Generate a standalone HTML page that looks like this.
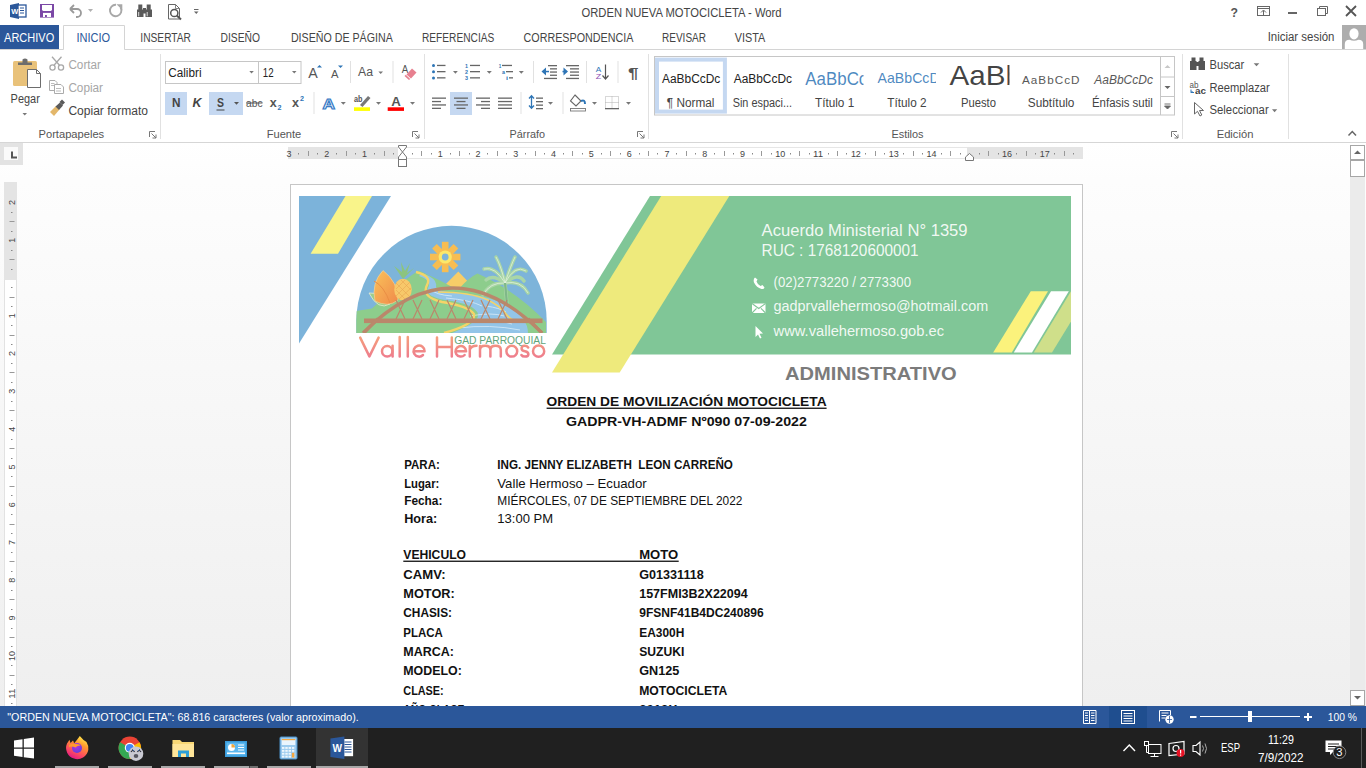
<!DOCTYPE html><html><head><meta charset="utf-8"><style>html,body{margin:0;padding:0;width:1366px;height:768px;overflow:hidden;background:#fff}svg{display:block}text{font-family:"Liberation Sans",sans-serif;white-space:pre}</style></head><body><svg width="1366" height="768" viewBox="0 0 1366 768"><rect x="0" y="0" width="1366" height="143" fill="#ffffff"/>
<defs><linearGradient id="docbg" x1="0" y1="0" x2="0" y2="1"><stop offset="0" stop-color="#ffffff"/><stop offset="0.066" stop-color="#fdfdfd"/><stop offset="1" stop-color="#efefef"/></linearGradient></defs>
<rect x="0" y="143" width="1366" height="563" fill="url(#docbg)"/>
<rect x="0" y="142" width="1366" height="1" fill="#d6d6d6"/>
<g transform="translate(10,3)"><path d="M0 2 L9 0 L9 16 L0 14 Z" fill="#2b579a"/><rect x="8" y="2" width="8" height="12" fill="#fff" stroke="#2b579a" stroke-width="1.3"/><path d="M10 5h4M10 7.5h4M10 10h4" stroke="#2b579a" stroke-width="1"/><text x="1.3" y="11" font-size="7.5" font-weight="bold" fill="#fff" font-family="Liberation Sans">W</text></g>
<rect x="40" y="4" width="14" height="13.6" fill="#7b48a6"/><path d="M42 5 H52 V9.5 Q52 10.9 50.6 10.9 H43.4 Q42 10.9 42 9.5 Z" fill="#fff"/><rect x="43" y="12.9" width="8" height="4.1" fill="#fff"/><rect x="45" y="15" width="1.9" height="2" fill="#7b48a6"/>
<path d="M70 9 L74 5 M70 9 L74 13 M70.5 9 H77 A4 4 0 0 1 77 17 H76" stroke="#9a9a9a" stroke-width="1.8" fill="none"/>
<path d="M88 9 L93 9 L90.5 12 Z" fill="#b0b0b0"/>
<path d="M116 4.8 A5.7 5.7 0 1 0 120.6 7.6" stroke="#a8a8a8" stroke-width="1.9" fill="none"/><path d="M116.5 4.2 H122.3 V10 Z" fill="#a8a8a8"/>
<g fill="#5a5a5a"><rect x="137" y="9.5" width="6.5" height="7.5"/><rect x="145.5" y="9.5" width="6.5" height="7.5"/><rect x="138.3" y="4.5" width="4" height="5.5"/><rect x="146.7" y="4.5" width="4" height="5.5"/><rect x="143" y="8" width="3" height="5.5"/></g><path d="M138.7 12 V16.3 M147.2 12 V16.3" stroke="#fff" stroke-width="0.8"/>
<path d="M168.5 4.5 H175.5 L179.5 8.5 V19 H168.5 Z" fill="none" stroke="#666" stroke-width="1"/><path d="M175.5 4.5 V8.5 H179.5" fill="none" stroke="#666" stroke-width="0.8"/><circle cx="174.3" cy="13" r="3.6" fill="#fff" stroke="#555" stroke-width="1.5"/><path d="M176.8 15.5 L181 19.5" stroke="#555" stroke-width="2"/>
<path d="M194 9.5 H198.5" stroke="#666" stroke-width="1"/><path d="M194 11.5 H198.5 L196.25 14 Z" fill="#666"/>
<text x="581.5" y="17" font-size="12.3" fill="#444" textLength="200" lengthAdjust="spacingAndGlyphs">ORDEN NUEVA MOTOCICLETA - Word</text>
<text x="1230.5" y="16.5" font-size="13" fill="#555" textLength="7.5" lengthAdjust="spacingAndGlyphs" font-weight="bold">?</text>
<rect x="1257.5" y="6.5" width="12" height="9" fill="none" stroke="#666" stroke-width="1"/><path d="M1257.5 8.5 H1269.5" stroke="#666"/><path d="M1263.5 15 V10.5 M1261 12.5 L1263.5 10 L1266 12.5" stroke="#666" fill="none" stroke-width="1"/>
<rect x="1288" y="12" width="9" height="2" fill="#666"/>
<rect x="1317.5" y="8.5" width="8" height="7" fill="none" stroke="#666"/><path d="M1319.5 8.5 V6.5 H1327.5 V13.5 H1325.5" fill="none" stroke="#666"/>
<path d="M1346 6 L1356 16 M1356 6 L1346 16" stroke="#555" stroke-width="1.8"/>
<rect x="0" y="25" width="59" height="25" fill="#2b579a"/>
<text x="4.1" y="42" font-size="12.3" fill="#ffffff" textLength="50.1" lengthAdjust="spacingAndGlyphs">ARCHIVO</text>
<path d="M0 49.5 H63.5 V25.5 H124.5 V49.5 H1366" fill="#fff" stroke="#d4d4d4" stroke-width="1"/>
<rect x="64" y="40" width="60" height="10" fill="#fff"/>
<text x="76.4" y="42" font-size="12.3" fill="#2b579a" textLength="33.7" lengthAdjust="spacingAndGlyphs">INICIO</text>
<text x="140.3" y="42" font-size="12.3" fill="#444" textLength="50.7" lengthAdjust="spacingAndGlyphs">INSERTAR</text>
<text x="220.6" y="42" font-size="12.3" fill="#444" textLength="39.4" lengthAdjust="spacingAndGlyphs">DISEÑO</text>
<text x="290.9" y="42" font-size="12.3" fill="#444" textLength="101.9" lengthAdjust="spacingAndGlyphs">DISEÑO DE PÁGINA</text>
<text x="422" y="42" font-size="12.3" fill="#444" textLength="72.3" lengthAdjust="spacingAndGlyphs">REFERENCIAS</text>
<text x="523.6" y="42" font-size="12.3" fill="#444" textLength="109.8" lengthAdjust="spacingAndGlyphs">CORRESPONDENCIA</text>
<text x="662" y="42" font-size="12.3" fill="#444" textLength="44" lengthAdjust="spacingAndGlyphs">REVISAR</text>
<text x="734.7" y="42" font-size="12.3" fill="#444" textLength="30.5" lengthAdjust="spacingAndGlyphs">VISTA</text>
<text x="1267.7" y="41" font-size="12.3" fill="#444" textLength="66.7" lengthAdjust="spacingAndGlyphs">Iniciar sesión</text>
<rect x="1342" y="25" width="24" height="24" fill="#adadad"/>
<ellipse cx="1354" cy="33.8" rx="4.6" ry="5.6" fill="#fff"/><path d="M1344.8 49 V44 Q1345 39.8 1349.5 39.8 Q1354 41.5 1358.5 39.8 Q1363 39.8 1363.2 44 V49 Z" fill="#fff"/>
<rect x="160" y="54" width="1" height="85" fill="#e1e1e1"/>
<rect x="424" y="54" width="1" height="85" fill="#e1e1e1"/>
<rect x="648" y="54" width="1" height="85" fill="#e1e1e1"/>
<rect x="1182" y="54" width="1" height="85" fill="#e1e1e1"/>
<rect x="1288" y="54" width="1" height="85" fill="#e1e1e1"/>
<rect x="13" y="61" width="24" height="25" rx="1.5" fill="#e9c27a"/>
<path d="M18 65 V62.5 H22.5 V59.5 Q25 57.5 27.5 59.5 V62.5 H32 V65 Z" fill="#6d6d6d"/>
<path d="M27.5 69.5 H36.5 L40.5 73.5 V87.5 H27.5 Z" fill="#fff" stroke="#6d6d6d" stroke-width="1"/><path d="M36.5 69.5 V73.5 H40.5" fill="none" stroke="#6d6d6d" stroke-width="1"/>
<text x="10.6" y="103.2" font-size="12.3" fill="#444" textLength="29.2" lengthAdjust="spacingAndGlyphs">Pegar</text>
<path d="M22.5 113 H27.0 L24.75 115.475 Z" fill="#777"/>
<g stroke="#a8a8a8" stroke-width="1.3" fill="none"><circle cx="52.5" cy="67.5" r="2.6"/><circle cx="61" cy="67.5" r="2.6"/><path d="M54 65.3 L61.5 56.8 M59.5 65.3 L52 56.8"/></g>
<text x="68.4" y="69.3" font-size="12.3" fill="#a6a6a6" textLength="32.6" lengthAdjust="spacingAndGlyphs">Cortar</text>
<g stroke="#ababab" stroke-width="1" fill="#fff"><path d="M49.5 80.5 H55 L57 82.5 V90.5 H49.5 Z"/><path d="M54.5 84.5 H61 L63.5 87 V93.5 H54.5 Z"/><path d="M51 83.5h3.5M51 85.5h3M56 88.5h5M56 91h5" stroke-width="0.8"/></g>
<text x="68.4" y="92.1" font-size="12.3" fill="#a6a6a6" textLength="34.6" lengthAdjust="spacingAndGlyphs">Copiar</text>
<path d="M50 112 L56 106 L59.5 109.5 L54 116 Z" fill="#e3b76a"/><path d="M55.5 106.5 L60 102.5 L63 105.5 L59 110 Z" fill="#5a5a5a"/><path d="M59.5 102 L62 99.5 L65 102.5 L62.5 105 Z" fill="#5a5a5a"/>
<text x="68.4" y="114.9" font-size="12.3" fill="#444" textLength="79.6" lengthAdjust="spacingAndGlyphs">Copiar formato</text>
<text x="38.5" y="137.8" font-size="11" fill="#555" textLength="65.7" lengthAdjust="spacingAndGlyphs">Portapapeles</text>
<path d="M149.5 137 V131.5 H155" fill="none" stroke="#777" stroke-width="1"/><path d="M151.5 133.5 L156 138 M156 134.5 V138 H152.5" fill="none" stroke="#777" stroke-width="1"/>
<rect x="165.5" y="61.5" width="93" height="22" fill="#fff" stroke="#c6c6c6"/><rect x="258.5" y="61.5" width="42.5" height="22" fill="#fff" stroke="#c6c6c6"/>
<text x="168.3" y="76.7" font-size="12.3" fill="#222" textLength="33.2" lengthAdjust="spacingAndGlyphs">Calibri</text>
<path d="M249.3 71 H253.8 L251.55 73.475 Z" fill="#777"/>
<text x="262.8" y="76.7" font-size="12.3" fill="#222" textLength="10.8" lengthAdjust="spacingAndGlyphs">12</text>
<path d="M292 71 H296.5 L294.25 73.475 Z" fill="#777"/>
<text x="308.2" y="78" font-size="14" fill="#555" textLength="9.5" lengthAdjust="spacingAndGlyphs">A</text>
<path d="M317 67.5 H322 L319.5 65 Z" fill="#2e75b6"/>
<text x="331" y="78" font-size="11" fill="#555" textLength="7.5" lengthAdjust="spacingAndGlyphs">A</text>
<path d="M338 65.5 H343 L340.5 68 Z" fill="#2e75b6"/>
<rect x="350" y="61" width="1" height="22" fill="#e1e1e1"/>
<text x="358" y="76" font-size="12.5" fill="#555" textLength="15" lengthAdjust="spacingAndGlyphs">Aa</text>
<path d="M378.4 71.5 H383.0 L380.7 74.03 Z" fill="#777"/>
<rect x="392.5" y="61" width="1" height="22" fill="#e1e1e1"/>
<text x="401.8" y="73" font-size="11" fill="#555" textLength="6.5" lengthAdjust="spacingAndGlyphs">A</text>
<path d="M406.5 74.5 L412 68.5 L416.5 72.5 L411 78.5 Z" fill="#e7808f"/><path d="M404.5 76 L405.8 74.8 L410.2 79 L409 80 Z" fill="#e7808f"/>
<rect x="165" y="92" width="22" height="23" fill="#c5d8f1"/>
<rect x="209" y="92" width="34" height="23" fill="#c5d8f1"/>
<text x="171.9" y="107.3" font-size="12" fill="#444" textLength="8.5" lengthAdjust="spacingAndGlyphs" font-weight="bold">N</text>
<text x="192.6" y="107.3" font-size="12" fill="#444" textLength="9" lengthAdjust="spacingAndGlyphs" font-weight="bold" font-style="italic">K</text>
<text x="217" y="107.3" font-size="12" fill="#444" textLength="7" lengthAdjust="spacingAndGlyphs" font-weight="bold">S</text>
<rect x="216.5" y="109.5" width="8" height="1" fill="#444"/>
<path d="M234 102 H239 L236.5 104.75 Z" fill="#555"/>
<text x="246" y="107" font-size="11.5" fill="#555" textLength="16.5" lengthAdjust="spacingAndGlyphs">abc</text>
<rect x="246" y="102.5" width="16.5" height="1" fill="#555"/>
<text x="269.7" y="107.3" font-size="12.5" fill="#555" textLength="7" lengthAdjust="spacingAndGlyphs" font-weight="bold">x</text>
<text x="277.5" y="110" font-size="6.5" fill="#2e75b6" textLength="4" lengthAdjust="spacingAndGlyphs" font-weight="bold">2</text>
<text x="292" y="107.3" font-size="12.5" fill="#555" textLength="7" lengthAdjust="spacingAndGlyphs" font-weight="bold">x</text>
<text x="300" y="100.5" font-size="6.5" fill="#2e75b6" textLength="4" lengthAdjust="spacingAndGlyphs" font-weight="bold">2</text>
<rect x="313.5" y="92" width="1" height="22" fill="#e1e1e1"/>
<text x="322.5" y="109" font-size="15.5" fill="#fff" textLength="12.5" lengthAdjust="spacingAndGlyphs" font-weight="bold" stroke="#3a7cc6" stroke-width="1.2">A</text>
<path d="M340.8 102 H345.8 L343.3 104.75 Z" fill="#777"/>
<text x="354" y="102" font-size="8.5" fill="#555" textLength="8.5" lengthAdjust="spacingAndGlyphs" font-weight="bold">ab</text>
<path d="M360 105 L368 96 L370.5 98 L362.5 107 Z" fill="#777"/>
<rect x="354" y="107.3" width="16" height="3.6" fill="#ffff00"/>
<path d="M376 102 H381 L378.5 104.75 Z" fill="#777"/>
<text x="391.3" y="106.2" font-size="12.5" fill="#555" textLength="9.6" lengthAdjust="spacingAndGlyphs" font-weight="bold">A</text>
<rect x="387.7" y="107.3" width="16.3" height="3.6" fill="#ff0000"/>
<path d="M410 102 H415 L412.5 104.75 Z" fill="#777"/>
<text x="266.7" y="137.8" font-size="11" fill="#555" textLength="34.6" lengthAdjust="spacingAndGlyphs">Fuente</text>
<path d="M412.5 137 V131.5 H418" fill="none" stroke="#777" stroke-width="1"/><path d="M414.5 133.5 L419 138 M419 134.5 V138 H415.5" fill="none" stroke="#777" stroke-width="1"/>
<circle cx="433.5" cy="65.5" r="1.5" fill="#2e75b6"/>
<rect x="437" y="64.8" width="8.5" height="1.3" fill="#666"/>
<circle cx="433.5" cy="71.7" r="1.5" fill="#2e75b6"/>
<rect x="437" y="71.0" width="8.5" height="1.3" fill="#666"/>
<circle cx="433.5" cy="77.9" r="1.5" fill="#2e75b6"/>
<rect x="437" y="77.2" width="8.5" height="1.3" fill="#666"/>
<path d="M453 71 H457.8 L455.4 73.64 Z" fill="#777"/>
<text x="465" y="68" font-size="5.5" fill="#2e75b6" textLength="3" lengthAdjust="spacingAndGlyphs" font-weight="bold">1</text>
<rect x="470" y="64.8" width="10" height="1.3" fill="#666"/>
<text x="465" y="74" font-size="5.5" fill="#2e75b6" textLength="3" lengthAdjust="spacingAndGlyphs" font-weight="bold">2</text>
<rect x="470" y="71.0" width="10" height="1.3" fill="#666"/>
<text x="465" y="80" font-size="5.5" fill="#2e75b6" textLength="3" lengthAdjust="spacingAndGlyphs" font-weight="bold">3</text>
<rect x="470" y="77.2" width="10" height="1.3" fill="#666"/>
<path d="M486.8 71 H491.8 L489.3 73.75 Z" fill="#777"/>
<text x="498.7" y="68" font-size="5.5" fill="#2e75b6" textLength="2.5" lengthAdjust="spacingAndGlyphs" font-weight="bold">1</text>
<rect x="502" y="64.8" width="10" height="1.3" fill="#666"/>
<text x="502" y="74" font-size="5.5" fill="#2e75b6" textLength="3" lengthAdjust="spacingAndGlyphs" font-weight="bold">a</text>
<rect x="506" y="71" width="7" height="1.3" fill="#666"/>
<text x="506" y="80" font-size="5.5" fill="#2e75b6" textLength="2" lengthAdjust="spacingAndGlyphs" font-weight="bold">i</text>
<rect x="509" y="77.2" width="4" height="1.3" fill="#666"/>
<path d="M518.8 71 H523.8 L521.3 73.75 Z" fill="#777"/>
<rect x="533" y="61" width="1" height="22" fill="#e1e1e1"/>
<path d="M541.5 71.5 L546 67.5 V75.5 Z" fill="#2e75b6"/><rect x="545" y="70.8" width="4" height="1.5" fill="#2e75b6"/>
<rect x="548" y="65" width="9" height="1.3" fill="#666"/>
<rect x="550" y="68.2" width="7" height="1.3" fill="#666"/>
<rect x="550" y="71.4" width="7" height="1.3" fill="#666"/>
<rect x="550" y="74.6" width="7" height="1.3" fill="#666"/>
<rect x="544" y="77.8" width="13" height="1.3" fill="#666"/>
<path d="M568 71.5 L563.5 67.5 V75.5 Z" fill="#2e75b6"/><rect x="562.5" y="70.8" width="4" height="1.5" fill="#2e75b6"/>
<rect x="566" y="65" width="13" height="1.3" fill="#666"/>
<rect x="570" y="68.2" width="9" height="1.3" fill="#666"/>
<rect x="570" y="71.4" width="9" height="1.3" fill="#666"/>
<rect x="570" y="74.6" width="9" height="1.3" fill="#666"/>
<rect x="566" y="77.8" width="13" height="1.3" fill="#666"/>
<rect x="586" y="61" width="1" height="22" fill="#e1e1e1"/>
<text x="595.7" y="71.5" font-size="7.5" fill="#2e75b6" textLength="5.5" lengthAdjust="spacingAndGlyphs">A</text>
<text x="595.7" y="79" font-size="7.5" fill="#8e4db3" textLength="5.5" lengthAdjust="spacingAndGlyphs">Z</text>
<path d="M605.5 64.5 V78.5 M602.5 75.5 L605.5 79 L608.5 75.5" stroke="#555" stroke-width="1.2" fill="none"/>
<rect x="617.5" y="61" width="1" height="22" fill="#e1e1e1"/>
<text x="628" y="77.8" font-size="14" fill="#555" textLength="10.5" lengthAdjust="spacingAndGlyphs" font-weight="bold">¶</text>
<rect x="450" y="92" width="22" height="23" fill="#c5d8f1"/>
<rect x="432" y="97.5" width="14" height="1.3" fill="#666"/>
<rect x="432" y="100.9" width="9" height="1.3" fill="#666"/>
<rect x="432" y="104.3" width="14" height="1.3" fill="#666"/>
<rect x="432" y="107.7" width="9" height="1.3" fill="#666"/>
<rect x="454.0" y="97.5" width="14" height="1.3" fill="#666"/>
<rect x="456.5" y="100.9" width="9" height="1.3" fill="#666"/>
<rect x="454.0" y="104.3" width="14" height="1.3" fill="#666"/>
<rect x="456.5" y="107.7" width="9" height="1.3" fill="#666"/>
<rect x="476" y="97.5" width="14" height="1.3" fill="#666"/>
<rect x="481" y="100.9" width="9" height="1.3" fill="#666"/>
<rect x="476" y="104.3" width="14" height="1.3" fill="#666"/>
<rect x="481" y="107.7" width="9" height="1.3" fill="#666"/>
<rect x="498" y="97.5" width="14" height="1.3" fill="#666"/>
<rect x="498" y="100.9" width="14" height="1.3" fill="#666"/>
<rect x="498" y="104.3" width="14" height="1.3" fill="#666"/>
<rect x="498" y="107.7" width="14" height="1.3" fill="#666"/>
<rect x="520.5" y="92" width="1" height="22" fill="#e1e1e1"/>
<path d="M531.5 96 V108 M529 98.5 L531.5 95.8 L534 98.5 M529 105.5 L531.5 108.2 L534 105.5" stroke="#2e75b6" stroke-width="1.3" fill="none"/>
<rect x="536" y="97.5" width="7" height="1.3" fill="#666"/>
<rect x="536" y="101" width="7" height="1.3" fill="#666"/>
<rect x="536" y="104.5" width="7" height="1.3" fill="#666"/>
<rect x="536" y="108" width="7" height="1.3" fill="#666"/>
<path d="M548 102 H553 L550.5 104.75 Z" fill="#777"/>
<rect x="562.5" y="92" width="1" height="22" fill="#e1e1e1"/>
<path d="M575 95 L581 101 L576 106 L570.5 101 Z" fill="#fff" stroke="#666" stroke-width="1.1"/><path d="M581 101 Q585 99 585 104" stroke="#2e75b6" stroke-width="2" fill="none"/><rect x="570.5" y="108.5" width="15" height="2.5" fill="#fff" stroke="#777" stroke-width="0.9"/>
<path d="M592 102 H597 L594.5 104.75 Z" fill="#777"/>
<rect x="605.5" y="96.5" width="13" height="12" fill="none" stroke="#b0b0b0" stroke-width="1" stroke-dasharray="1,1"/><path d="M612 96.5 V108.5 M605.5 102.5 H618.5" stroke="#b0b0b0" stroke-width="1" stroke-dasharray="1,1"/><rect x="605" y="108" width="14" height="1.3" fill="#666"/>
<path d="M626 102 H631 L628.5 104.75 Z" fill="#777"/>
<text x="509.6" y="137.8" font-size="11" fill="#555" textLength="35.5" lengthAdjust="spacingAndGlyphs">Párrafo</text>
<path d="M637.5 137 V131.5 H643" fill="none" stroke="#777" stroke-width="1"/><path d="M639.5 133.5 L644 138 M644 134.5 V138 H640.5" fill="none" stroke="#777" stroke-width="1"/>
<rect x="654.5" y="56.5" width="520" height="58.5" fill="#fff" stroke="#c6c6c6" stroke-width="1"/>
<rect x="657" y="59.6" width="67.9" height="52" fill="#fff" stroke="#c5d8f1" stroke-width="4"/>
<path d="M1160.5 57 V115 M1160.5 77 H1174 M1160.5 96.5 H1174" stroke="#c6c6c6" stroke-width="1" fill="none"/>
<path d="M1164.5 68 H1170.5 L1167.5 65 Z" fill="#c8c8c8"/>
<path d="M1164.5 86 H1170.5 L1167.5 89 Z" fill="#666"/>
<path d="M1164.5 104 H1170.5 M1164.5 106 H1170.5 L1167.5 109 Z" stroke="#666" stroke-width="0.9" fill="#666"/>
<text x="662" y="82.8" font-size="12" fill="#222" textLength="58.3" lengthAdjust="spacingAndGlyphs">AaBbCcDc</text>
<text x="733.7" y="82.8" font-size="12" fill="#222" textLength="58.3" lengthAdjust="spacingAndGlyphs">AaBbCcDc</text>
<clipPath id="cl1"><rect x="800" y="60" width="63.5" height="30"/></clipPath><clipPath id="cl2"><rect x="870" y="60" width="66" height="30"/></clipPath><clipPath id="cl3"><rect x="945" y="58" width="64.5" height="32"/></clipPath>
<text x="805.3" y="85" font-size="17.5" fill="#2e74b5" textLength="62" lengthAdjust="spacingAndGlyphs" clip-path="url(#cl1)" fill-opacity="0.85">AaBbCc</text>
<text x="877.6" y="82.9" font-size="15" fill="#2e74b5" textLength="62" lengthAdjust="spacingAndGlyphs" clip-path="url(#cl2)" fill-opacity="0.85">AaBbCcD</text>
<text x="949.5" y="84.8" font-size="27.5" fill="#222" textLength="72.5" lengthAdjust="spacingAndGlyphs" clip-path="url(#cl3)" fill-opacity="0.85">AaBb</text>
<text x="1022" y="83.5" font-size="11.5" fill="#595959" textLength="58.5" lengthAdjust="spacingAndGlyphs" letter-spacing="1">AaBbCcD</text>
<text x="1094.3" y="83.5" font-size="12" fill="#595959" textLength="58.6" lengthAdjust="spacingAndGlyphs" font-style="italic">AaBbCcDc</text>
<text x="666.8" y="107" font-size="12.3" fill="#444" textLength="47.6" lengthAdjust="spacingAndGlyphs">¶ Normal</text>
<text x="732.7" y="107" font-size="12.3" fill="#444" textLength="59.3" lengthAdjust="spacingAndGlyphs">Sin espaci...</text>
<text x="815" y="107" font-size="12.3" fill="#444" textLength="39.2" lengthAdjust="spacingAndGlyphs">Título 1</text>
<text x="887.3" y="107" font-size="12.3" fill="#444" textLength="39.2" lengthAdjust="spacingAndGlyphs">Título 2</text>
<text x="961" y="107" font-size="12.3" fill="#444" textLength="35" lengthAdjust="spacingAndGlyphs">Puesto</text>
<text x="1027.8" y="107" font-size="12.3" fill="#444" textLength="46.6" lengthAdjust="spacingAndGlyphs">Subtítulo</text>
<text x="1092" y="107" font-size="12.3" fill="#444" textLength="60.9" lengthAdjust="spacingAndGlyphs">Énfasis sutil</text>
<text x="891.4" y="137.8" font-size="11" fill="#555" textLength="32.2" lengthAdjust="spacingAndGlyphs">Estilos</text>
<path d="M1171.5 137 V131.5 H1177" fill="none" stroke="#777" stroke-width="1"/><path d="M1173.5 133.5 L1178 138 M1178 134.5 V138 H1174.5" fill="none" stroke="#777" stroke-width="1"/>
<g fill="#555"><rect x="1190" y="61" width="6.5" height="9"/><rect x="1198.5" y="61" width="6.5" height="9"/><rect x="1191.5" y="57.5" width="4" height="4.5"/><rect x="1199.5" y="57.5" width="4" height="4.5"/><rect x="1196" y="62" width="3" height="4"/></g>
<text x="1209.5" y="68.7" font-size="12.3" fill="#444" textLength="34.7" lengthAdjust="spacingAndGlyphs">Buscar</text>
<path d="M1253.7 63.2 H1259.3 L1256.5 66.28 Z" fill="#777"/>
<text x="1189.6" y="87.5" font-size="8.5" fill="#555" textLength="9" lengthAdjust="spacingAndGlyphs">ab</text>
<path d="M1191 89.5 V92.5 H1194 M1192.5 91 L1191 92.5" stroke="#2e75b6" stroke-width="1" fill="none"/>
<text x="1195" y="93.6" font-size="9.5" fill="#444" textLength="11" lengthAdjust="spacingAndGlyphs" font-weight="bold">ac</text>
<text x="1209.5" y="91.7" font-size="12.3" fill="#444" textLength="60.3" lengthAdjust="spacingAndGlyphs">Reemplazar</text>
<path d="M1194.5 102.5 V114 L1197.5 111.3 L1200 116 L1201.8 115 L1199.5 110.5 L1203.5 110.5 Z" fill="#fff" stroke="#666" stroke-width="1"/>
<text x="1209.5" y="114.4" font-size="12.3" fill="#444" textLength="59.2" lengthAdjust="spacingAndGlyphs">Seleccionar</text>
<path d="M1272 109.3 H1277.2 L1274.6 112.16 Z" fill="#777"/>
<text x="1216.7" y="137.8" font-size="11" fill="#555" textLength="36.7" lengthAdjust="spacingAndGlyphs">Edición</text>
<path d="M1348.5 135.5 L1352.3 131.5 L1356 135.5" stroke="#666" stroke-width="1.5" fill="none"/>
<rect x="0" y="143" width="23" height="22" fill="#e3e3e3"/>
<rect x="4" y="147" width="14" height="13" fill="#fafafa"/>
<path d="M12 151.5 V157.5 H17" stroke="#555" stroke-width="2" fill="none"/>
<rect x="288" y="147" width="795" height="12" fill="#e4e4e4"/>
<rect x="398" y="147" width="569" height="12" fill="#ffffff"/>
<rect x="398" y="147" width="569" height="1" fill="#e6e6e6"/>
<rect x="398" y="158" width="569" height="1" fill="#e6e6e6"/>
<text x="286.53" y="156.8" font-size="9" fill="#444" textLength="5.0" lengthAdjust="spacingAndGlyphs">3</text>
<rect x="298" y="153" width="1" height="1.5" fill="#888"/>
<rect x="308" y="151" width="1" height="5" fill="#999"/>
<rect x="317" y="153" width="1" height="1.5" fill="#888"/>
<text x="324.32" y="156.8" font-size="9" fill="#444" textLength="5.0" lengthAdjust="spacingAndGlyphs">2</text>
<rect x="336" y="153" width="1" height="1.5" fill="#888"/>
<rect x="346" y="151" width="1" height="5" fill="#999"/>
<rect x="355" y="153" width="1" height="1.5" fill="#888"/>
<text x="362.10999999999996" y="156.8" font-size="9" fill="#444" textLength="5.0" lengthAdjust="spacingAndGlyphs">1</text>
<rect x="374" y="153" width="1" height="1.5" fill="#888"/>
<rect x="384" y="151" width="1" height="5" fill="#999"/>
<rect x="393" y="153" width="1" height="1.5" fill="#888"/>
<rect x="412" y="153" width="1" height="1.5" fill="#888"/>
<rect x="421" y="151" width="1" height="5" fill="#999"/>
<rect x="431" y="153" width="1" height="1.5" fill="#888"/>
<text x="437.69" y="156.8" font-size="9" fill="#444" textLength="5.0" lengthAdjust="spacingAndGlyphs">1</text>
<rect x="450" y="153" width="1" height="1.5" fill="#888"/>
<rect x="459" y="151" width="1" height="5" fill="#999"/>
<rect x="469" y="153" width="1" height="1.5" fill="#888"/>
<text x="475.47999999999996" y="156.8" font-size="9" fill="#444" textLength="5.0" lengthAdjust="spacingAndGlyphs">2</text>
<rect x="487" y="153" width="1" height="1.5" fill="#888"/>
<rect x="497" y="151" width="1" height="5" fill="#999"/>
<rect x="506" y="153" width="1" height="1.5" fill="#888"/>
<text x="513.27" y="156.8" font-size="9" fill="#444" textLength="5.0" lengthAdjust="spacingAndGlyphs">3</text>
<rect x="525" y="153" width="1" height="1.5" fill="#888"/>
<rect x="535" y="151" width="1" height="5" fill="#999"/>
<rect x="544" y="153" width="1" height="1.5" fill="#888"/>
<text x="551.06" y="156.8" font-size="9" fill="#444" textLength="5.0" lengthAdjust="spacingAndGlyphs">4</text>
<rect x="563" y="153" width="1" height="1.5" fill="#888"/>
<rect x="572" y="151" width="1" height="5" fill="#999"/>
<rect x="582" y="153" width="1" height="1.5" fill="#888"/>
<text x="588.8499999999999" y="156.8" font-size="9" fill="#444" textLength="5.0" lengthAdjust="spacingAndGlyphs">5</text>
<rect x="601" y="153" width="1" height="1.5" fill="#888"/>
<rect x="610" y="151" width="1" height="5" fill="#999"/>
<rect x="620" y="153" width="1" height="1.5" fill="#888"/>
<text x="626.64" y="156.8" font-size="9" fill="#444" textLength="5.0" lengthAdjust="spacingAndGlyphs">6</text>
<rect x="639" y="153" width="1" height="1.5" fill="#888"/>
<rect x="648" y="151" width="1" height="5" fill="#999"/>
<rect x="657" y="153" width="1" height="1.5" fill="#888"/>
<text x="664.43" y="156.8" font-size="9" fill="#444" textLength="5.0" lengthAdjust="spacingAndGlyphs">7</text>
<rect x="676" y="153" width="1" height="1.5" fill="#888"/>
<rect x="686" y="151" width="1" height="5" fill="#999"/>
<rect x="695" y="153" width="1" height="1.5" fill="#888"/>
<text x="702.22" y="156.8" font-size="9" fill="#444" textLength="5.0" lengthAdjust="spacingAndGlyphs">8</text>
<rect x="714" y="153" width="1" height="1.5" fill="#888"/>
<rect x="724" y="151" width="1" height="5" fill="#999"/>
<rect x="733" y="153" width="1" height="1.5" fill="#888"/>
<text x="740.01" y="156.8" font-size="9" fill="#444" textLength="5.0" lengthAdjust="spacingAndGlyphs">9</text>
<rect x="752" y="153" width="1" height="1.5" fill="#888"/>
<rect x="761" y="151" width="1" height="5" fill="#999"/>
<rect x="771" y="153" width="1" height="1.5" fill="#888"/>
<text x="775.3" y="156.8" font-size="9" fill="#444" textLength="10.0" lengthAdjust="spacingAndGlyphs">10</text>
<rect x="790" y="153" width="1" height="1.5" fill="#888"/>
<rect x="799" y="151" width="1" height="5" fill="#999"/>
<rect x="809" y="153" width="1" height="1.5" fill="#888"/>
<text x="813.0899999999999" y="156.8" font-size="9" fill="#444" textLength="10.0" lengthAdjust="spacingAndGlyphs">11</text>
<rect x="828" y="153" width="1" height="1.5" fill="#888"/>
<rect x="837" y="151" width="1" height="5" fill="#999"/>
<rect x="846" y="153" width="1" height="1.5" fill="#888"/>
<text x="850.88" y="156.8" font-size="9" fill="#444" textLength="10.0" lengthAdjust="spacingAndGlyphs">12</text>
<rect x="865" y="153" width="1" height="1.5" fill="#888"/>
<rect x="875" y="151" width="1" height="5" fill="#999"/>
<rect x="884" y="153" width="1" height="1.5" fill="#888"/>
<text x="888.67" y="156.8" font-size="9" fill="#444" textLength="10.0" lengthAdjust="spacingAndGlyphs">13</text>
<rect x="903" y="153" width="1" height="1.5" fill="#888"/>
<rect x="913" y="151" width="1" height="5" fill="#999"/>
<rect x="922" y="153" width="1" height="1.5" fill="#888"/>
<text x="926.4599999999999" y="156.8" font-size="9" fill="#444" textLength="10.0" lengthAdjust="spacingAndGlyphs">14</text>
<rect x="941" y="153" width="1" height="1.5" fill="#888"/>
<rect x="950" y="151" width="1" height="5" fill="#999"/>
<rect x="960" y="153" width="1" height="1.5" fill="#888"/>
<rect x="979" y="153" width="1" height="1.5" fill="#888"/>
<rect x="988" y="151" width="1" height="5" fill="#999"/>
<rect x="998" y="153" width="1" height="1.5" fill="#888"/>
<text x="1002.04" y="156.8" font-size="9" fill="#444" textLength="10.0" lengthAdjust="spacingAndGlyphs">16</text>
<rect x="1016" y="153" width="1" height="1.5" fill="#888"/>
<rect x="1026" y="151" width="1" height="5" fill="#999"/>
<rect x="1035" y="153" width="1" height="1.5" fill="#888"/>
<text x="1039.83" y="156.8" font-size="9" fill="#444" textLength="10.0" lengthAdjust="spacingAndGlyphs">17</text>
<rect x="1054" y="153" width="1" height="1.5" fill="#888"/>
<rect x="1064" y="151" width="1" height="5" fill="#999"/>
<rect x="1073" y="153" width="1" height="1.5" fill="#888"/>
<path d="M398.5 145.5 H406.5 V147 L402.5 152 L398.5 147 Z" fill="#fff" stroke="#777" stroke-width="1"/>
<path d="M398.5 159.5 V157 L402.5 152 L406.5 157 V159.5 Z" fill="#fff" stroke="#777" stroke-width="1"/>
<rect x="398.5" y="159.5" width="8" height="7" fill="#fff" stroke="#777" stroke-width="1"/>
<path d="M965.5 160.5 V157 L969.5 153.5 L973.5 157 V160.5 Z" fill="#fff" stroke="#777" stroke-width="1"/>
<rect x="4" y="182" width="13" height="524" fill="#ffffff"/>
<rect x="4" y="182" width="1" height="524" fill="#e2e2e2"/>
<rect x="16" y="182" width="1" height="524" fill="#e2e2e2"/>
<rect x="4" y="182" width="13" height="98" fill="#e4e4e4"/>
<text x="0" y="0" font-size="9" fill="#444" textLength="5.0" lengthAdjust="spacingAndGlyphs" transform="translate(14.8,204.92000000000002) rotate(-90)">2</text>
<rect x="11" y="212" width="1.5" height="1" fill="#888"/>
<rect x="9.5" y="221" width="5" height="1" fill="#999"/>
<rect x="11" y="231" width="1.5" height="1" fill="#888"/>
<text x="0" y="0" font-size="9" fill="#444" textLength="5.0" lengthAdjust="spacingAndGlyphs" transform="translate(14.8,242.71) rotate(-90)">1</text>
<rect x="11" y="250" width="1.5" height="1" fill="#888"/>
<rect x="9.5" y="259" width="5" height="1" fill="#999"/>
<rect x="11" y="269" width="1.5" height="1" fill="#888"/>
<rect x="11" y="287" width="1.5" height="1" fill="#888"/>
<rect x="9.5" y="297" width="5" height="1" fill="#999"/>
<rect x="11" y="306" width="1.5" height="1" fill="#888"/>
<text x="0" y="0" font-size="9" fill="#444" textLength="5.0" lengthAdjust="spacingAndGlyphs" transform="translate(14.8,318.29) rotate(-90)">1</text>
<rect x="11" y="325" width="1.5" height="1" fill="#888"/>
<rect x="9.5" y="335" width="5" height="1" fill="#999"/>
<rect x="11" y="344" width="1.5" height="1" fill="#888"/>
<text x="0" y="0" font-size="9" fill="#444" textLength="5.0" lengthAdjust="spacingAndGlyphs" transform="translate(14.8,356.08) rotate(-90)">2</text>
<rect x="11" y="363" width="1.5" height="1" fill="#888"/>
<rect x="9.5" y="372" width="5" height="1" fill="#999"/>
<rect x="11" y="382" width="1.5" height="1" fill="#888"/>
<text x="0" y="0" font-size="9" fill="#444" textLength="5.0" lengthAdjust="spacingAndGlyphs" transform="translate(14.8,393.87) rotate(-90)">3</text>
<rect x="11" y="401" width="1.5" height="1" fill="#888"/>
<rect x="9.5" y="410" width="5" height="1" fill="#999"/>
<rect x="11" y="420" width="1.5" height="1" fill="#888"/>
<text x="0" y="0" font-size="9" fill="#444" textLength="5.0" lengthAdjust="spacingAndGlyphs" transform="translate(14.8,431.65999999999997) rotate(-90)">4</text>
<rect x="11" y="439" width="1.5" height="1" fill="#888"/>
<rect x="9.5" y="448" width="5" height="1" fill="#999"/>
<rect x="11" y="458" width="1.5" height="1" fill="#888"/>
<text x="0" y="0" font-size="9" fill="#444" textLength="5.0" lengthAdjust="spacingAndGlyphs" transform="translate(14.8,469.45) rotate(-90)">5</text>
<rect x="11" y="476" width="1.5" height="1" fill="#888"/>
<rect x="9.5" y="486" width="5" height="1" fill="#999"/>
<rect x="11" y="495" width="1.5" height="1" fill="#888"/>
<text x="0" y="0" font-size="9" fill="#444" textLength="5.0" lengthAdjust="spacingAndGlyphs" transform="translate(14.8,507.24) rotate(-90)">6</text>
<rect x="11" y="514" width="1.5" height="1" fill="#888"/>
<rect x="9.5" y="524" width="5" height="1" fill="#999"/>
<rect x="11" y="533" width="1.5" height="1" fill="#888"/>
<text x="0" y="0" font-size="9" fill="#444" textLength="5.0" lengthAdjust="spacingAndGlyphs" transform="translate(14.8,545.03) rotate(-90)">7</text>
<rect x="11" y="552" width="1.5" height="1" fill="#888"/>
<rect x="9.5" y="561" width="5" height="1" fill="#999"/>
<rect x="11" y="571" width="1.5" height="1" fill="#888"/>
<text x="0" y="0" font-size="9" fill="#444" textLength="5.0" lengthAdjust="spacingAndGlyphs" transform="translate(14.8,582.8199999999999) rotate(-90)">8</text>
<rect x="11" y="590" width="1.5" height="1" fill="#888"/>
<rect x="9.5" y="599" width="5" height="1" fill="#999"/>
<rect x="11" y="609" width="1.5" height="1" fill="#888"/>
<text x="0" y="0" font-size="9" fill="#444" textLength="5.0" lengthAdjust="spacingAndGlyphs" transform="translate(14.8,620.61) rotate(-90)">9</text>
<rect x="11" y="628" width="1.5" height="1" fill="#888"/>
<rect x="9.5" y="637" width="5" height="1" fill="#999"/>
<rect x="11" y="646" width="1.5" height="1" fill="#888"/>
<text x="0" y="0" font-size="9" fill="#444" textLength="10.0" lengthAdjust="spacingAndGlyphs" transform="translate(14.8,660.9) rotate(-90)">10</text>
<rect x="11" y="665" width="1.5" height="1" fill="#888"/>
<rect x="9.5" y="675" width="5" height="1" fill="#999"/>
<rect x="11" y="684" width="1.5" height="1" fill="#888"/>
<text x="0" y="0" font-size="9" fill="#444" textLength="10.0" lengthAdjust="spacingAndGlyphs" transform="translate(14.8,698.69) rotate(-90)">11</text>
<rect x="11" y="703" width="1.5" height="1" fill="#888"/>
<rect x="1350" y="176" width="15" height="530" fill="#ebebeb"/>
<rect x="1350.5" y="145.5" width="14" height="14" fill="#fff" stroke="#a6a6a6" stroke-width="1"/>
<path d="M1354 154 H1361 L1357.5 150.5 Z" fill="#666"/>
<rect x="1350.5" y="160.5" width="14" height="16" fill="#fff" stroke="#a6a6a6" stroke-width="1"/>
<rect x="1350.5" y="690.5" width="14" height="15" fill="#fff" stroke="#a6a6a6" stroke-width="1"/>
<path d="M1354 696 H1361 L1357.5 699.5 Z" fill="#666"/>
<rect x="290.5" y="184.5" width="792" height="600" fill="#fff" stroke="#c6c6c6" stroke-width="1"/>
<path d="M299 196 H391 L299 343.5 Z" fill="#7cb3da"/>
<path d="M345.5 196 H372 L338 253.7 H310.6 Z" fill="#f9f48a"/>
<path d="M650 196 H1071 V354.5 H552 Z" fill="#80c697"/>
<path d="M661.2 196 H729.3 L619.7 372.6 H552 Z" fill="#eeea7c"/>
<path d="M1030.8 291.2 H1048 L1011.8 352.4 H993.2 Z" fill="#fbf27c"/>
<path d="M1051 291.2 H1068.8 L1032 352.4 H1013.8 Z" fill="#ffffff"/>
<path d="M1033.8 352.4 H1052 L1071 321.5 V291.2 Z" fill="#cfdf8a"/>
<text x="761.6" y="236" font-size="17" fill="#ffffff" textLength="206" lengthAdjust="spacingAndGlyphs" fill-opacity="0.9">Acuerdo Ministerial N° 1359</text>
<text x="761.6" y="255.6" font-size="17" fill="#ffffff" textLength="157" lengthAdjust="spacingAndGlyphs" fill-opacity="0.9">RUC : 1768120600001</text>
<text x="773.6" y="287.2" font-size="14" fill="#ffffff" textLength="137.4" lengthAdjust="spacingAndGlyphs" fill-opacity="0.9">(02)2773220 / 2773300</text>
<text x="773.6" y="311.3" font-size="14" fill="#ffffff" textLength="214.6" lengthAdjust="spacingAndGlyphs" fill-opacity="0.9">gadprvallehermoso@hotmail.com</text>
<text x="773.6" y="335.6" font-size="14" fill="#ffffff" textLength="170.4" lengthAdjust="spacingAndGlyphs" fill-opacity="0.9">www.vallehermoso.gob.ec</text>
<path d="M755 277.5 Q753 279 754 282.5 Q756.5 287.5 761.5 289 Q764 289.5 764.5 287.5 L762.5 285 L760.5 286 Q757.5 284.5 756.5 281.5 L757.5 279.5 Z" fill="#fff"/>
<path d="M752 303.5 H765.5 V313 H752 Z" fill="#fff"/><path d="M752 303.5 L758.75 308.5 L765.5 303.5 M752 313 L756.5 308.3 M765.5 313 L761 308.3" stroke="#80c697" stroke-width="1.1" fill="none"/>
<path d="M755.5 326 V337 L758 334.5 L760 338.5 L761.5 337.8 L759.5 333.8 L763 333.5 Z" fill="#fff"/>
<text x="785" y="379.6" font-size="19.2" fill="#7b7b7b" textLength="171.7" lengthAdjust="spacingAndGlyphs" font-weight="bold">ADMINISTRATIVO</text>
<defs><clipPath id="dome"><path d="M356.3 333 V321 A95.2 95.2 0 0 1 546.7 321 V333 Z"/></clipPath><linearGradient id="vh" x1="0" y1="0" x2="0" y2="1"><stop offset="0" stop-color="#f5a77c"/><stop offset="1" stop-color="#ef7d8c"/></linearGradient><linearGradient id="vh2" gradientUnits="userSpaceOnUse" x1="0" y1="336" x2="0" y2="358"><stop offset="0" stop-color="#f5a07a"/><stop offset="1" stop-color="#ee7c8e"/></linearGradient><linearGradient id="fr" x1="0" y1="0" x2="1" y2="1"><stop offset="0" stop-color="#f9c25a"/><stop offset="1" stop-color="#f08a4a"/></linearGradient></defs>
<g clip-path="url(#dome)">
<rect x="350" y="220" width="200" height="120" fill="#7db4da"/>
<path d="M438 292 L458.3 271.5 L478 292 Z" fill="#f7cd68"/>
<path d="M350 333 V312 L372 308.6 Q400 282 418.8 270.5 Q440 280 458 290 Q468 278 477.4 273.5 Q515 290 546 322 V333 Z" fill="#8dcd8c"/>
<path d="M419 276 Q432 280 428 288 Q424 296 445 300 Q475 304 478 314 Q480 322 452 333 H528 Q528 318 508 306 Q486 294 450 292 Q436 291 436 286 Q438 279 422 273 Z" fill="#93c5e8"/>
<path d="M430 289 Q436 295 452 296 M446 298 Q470 300 482 306 M458 328 Q490 324 520 330 M466 322 Q495 318 512 324 M470 316 Q492 312 504 316 M486 306 Q500 308 506 312" stroke="#e2f1fa" stroke-width="0.7" fill="none"/>
<path d="M416 272 Q432 276 427 285 Q421 297 442 302 Q468 306 474 314 Q476 324 444 333" stroke="#f4d468" stroke-width="2.4" fill="none"/>
<path d="M438 292 Q470 292 488 300 Q500 306 506 314 Q510 320 520 322" stroke="#f4d468" stroke-width="1.6" fill="none"/>
<g stroke="#a9d6a6" stroke-width="3.4" fill="none" stroke-linecap="round"><path d="M507 305 Q506 292 505 283"/><path d="M505 283 Q495 266 484 269"/><path d="M505 283 Q515 264 526 271"/><path d="M505 283 Q490 282 483 295"/><path d="M505 283 Q521 280 528 293"/><path d="M505 283 Q501 266 496 257"/><path d="M505 283 Q511 265 515 257"/><path d="M505 283 Q493 274 486 280"/><path d="M505 283 Q518 272 524 281"/></g>
<g stroke="#e6f3e2" stroke-width="0.7" fill="none"><path d="M505 283 Q495 266 484 269"/><path d="M505 283 Q515 264 526 271"/><path d="M505 283 Q490 282 483 295"/><path d="M505 283 Q521 280 528 293"/><path d="M505 283 Q501 266 496 257"/><path d="M505 283 Q511 265 515 257"/></g>
<path d="M507 305 Q506 292 505 283" stroke="#7fb889" stroke-width="2.2" fill="none"/>
<path d="M369 293 Q382 292 390 304 Q378 311 369 293 Z" fill="#9ccd8c" stroke="#f0f0e0" stroke-width="0.7"/>
<path d="M375 301 Q371 283 383 270.5 Q398 282 398 300 Q388 308 375 301 Z" fill="url(#fr)" stroke="#f6d9a0" stroke-width="0.6"/>
<path d="M374 281 Q384 286 390 303" stroke="#e98e45" stroke-width="1" fill="none"/>
<ellipse cx="403" cy="289.5" rx="8.8" ry="10.8" fill="#f7c86a"/>
<path d="M396 283 L410 297 M396 290 L405 299 M401 280 L411 290 M396 296 L410 282 M399 299 L411 288 M396 289 L405 280" stroke="#eaa650" stroke-width="0.6"/>
<path d="M403 279 L394 266 L402 272 L401 262 L405 271 L410 263 L407 273 L414 268 Z" fill="#8cc47f"/>
<g transform="translate(445.2,257)" fill="#f7bd52"><rect x="-3.3" y="-15.2" width="6.6" height="9" transform="rotate(0)"/><rect x="-3.3" y="-15.2" width="6.6" height="9" transform="rotate(45)"/><rect x="-3.3" y="-15.2" width="6.6" height="9" transform="rotate(90)"/><rect x="-3.3" y="-15.2" width="6.6" height="9" transform="rotate(135)"/><rect x="-3.3" y="-15.2" width="6.6" height="9" transform="rotate(180)"/><rect x="-3.3" y="-15.2" width="6.6" height="9" transform="rotate(225)"/><rect x="-3.3" y="-15.2" width="6.6" height="9" transform="rotate(270)"/><rect x="-3.3" y="-15.2" width="6.6" height="9" transform="rotate(315)"/><circle r="8.2"/></g><circle cx="445.2" cy="257" r="6.6" fill="#fbe86a"/><circle cx="445.2" cy="257" r="3.4" fill="#7db4da"/>
<path d="M363 333 Q452.5 243 542 333" stroke="#ba876b" stroke-width="3.4" fill="none"/>
<g stroke="#ba876b" stroke-width="1.2"><path d="M396 300 L405 319 M405 300 L396 319"/><path d="M413 300 L422 319 M422 300 L413 319"/><path d="M430 300 L439 319 M439 300 L430 319"/><path d="M447 300 L456 319 M456 300 L447 319"/><path d="M464 300 L473 319 M473 300 L464 319"/><path d="M481 300 L490 319 M490 300 L481 319"/><path d="M498 300 L507 319 M507 300 L498 319"/></g>
<rect x="364" y="318.5" width="178.5" height="4.6" fill="#ba876b"/>
<path d="M364 333 L378 318.5 M528 318.5 L542 333" stroke="#ba876b" stroke-width="3"/>
</g>
<rect x="354" y="333" width="195" height="26" fill="#fff"/>
<g stroke="url(#vh2)" stroke-width="2.5" fill="none" stroke-linecap="round" stroke-linejoin="round"><path d="M360.2 337.6 L369.4 356.4 L378.6 337.6"/><circle cx="387.2" cy="351.2" r="5.2"/><path d="M392.6 345.8 V356.6"/><path d="M399.7 337 V356.6 M407.8 337 V356.6"/><path d="M413.6 351.2 H424.6 A5.5 5.5 0 1 0 423 355"/><path d="M437 337.5 V356.6 M451.8 337.5 V356.6 M437 347 H451.8"/><path d="M455.5 351.2 H466.1 A5.3 5.3 0 1 0 464.6 355"/><path d="M469.8 356.6 V346 M469.8 349.5 Q471.5 345.8 476.5 345.8"/><path d="M480 356.6 V346 M480 350 Q480 345.8 485.2 345.8 Q490.4 345.8 490.4 350 V356.6 M490.4 350 Q490.4 345.8 495.6 345.8 Q500.8 345.8 500.8 350 V356.6"/><circle cx="511.8" cy="351.2" r="5.4"/><path d="M528.2 347.5 Q527 345.8 524.6 345.8 Q521.6 345.8 521.6 348.4 Q521.6 350.6 525 351.2 Q528.4 351.8 528.4 354.2 Q528.4 356.6 525 356.6 Q522.4 356.6 521.4 355"/><circle cx="538.6" cy="351.2" r="5.6"/></g>
<text x="454.2" y="344.4" font-size="10.5" fill="#5fa57a" textLength="91.7" lengthAdjust="spacingAndGlyphs">GAD PARROQUIAL</text>
<text x="546.6" y="405.8" font-size="12.6" fill="#111" textLength="280" lengthAdjust="spacingAndGlyphs" font-weight="bold">ORDEN DE MOVILIZACIÓN MOTOCICLETA</text>
<rect x="546.6" y="407.6" width="280" height="1.3" fill="#111"/>
<text x="565.9" y="426.2" font-size="12.6" fill="#111" textLength="241" lengthAdjust="spacingAndGlyphs" font-weight="bold">GADPR-VH-ADMF Nº090 07-09-2022</text>
<text x="404.2" y="469.1" font-size="12.6" fill="#111" textLength="35.6" lengthAdjust="spacingAndGlyphs" font-weight="bold">PARA:</text>
<text x="497.3" y="469.1" font-size="12.6" fill="#111" textLength="235.6" lengthAdjust="spacingAndGlyphs" font-weight="bold">ING. JENNY ELIZABETH  LEON CARREÑO</text>
<text x="404.2" y="487.6" font-size="12.6" fill="#111" textLength="35.1" lengthAdjust="spacingAndGlyphs" font-weight="bold">Lugar:</text>
<text x="497.3" y="487.6" font-size="12.6" fill="#111" textLength="149.4" lengthAdjust="spacingAndGlyphs">Valle Hermoso – Ecuador</text>
<text x="404.2" y="504.9" font-size="12.6" fill="#111" textLength="38.2" lengthAdjust="spacingAndGlyphs" font-weight="bold">Fecha:</text>
<text x="497.3" y="504.9" font-size="12.6" fill="#111" textLength="245.1" lengthAdjust="spacingAndGlyphs">MIÉRCOLES, 07 DE SEPTIEMBRE DEL 2022</text>
<text x="404.2" y="523.2" font-size="12.6" fill="#111" textLength="33" lengthAdjust="spacingAndGlyphs" font-weight="bold">Hora:</text>
<text x="497.3" y="523.2" font-size="12.6" fill="#111" textLength="55.8" lengthAdjust="spacingAndGlyphs">13:00 PM</text>
<text x="403.3" y="558.9" font-size="12.6" fill="#111" textLength="62.7" lengthAdjust="spacingAndGlyphs" font-weight="bold">VEHICULO</text>
<text x="639.2" y="558.9" font-size="12.6" fill="#111" textLength="39" lengthAdjust="spacingAndGlyphs" font-weight="bold">MOTO</text>
<rect x="403.3" y="560.6" width="275.4" height="1.3" fill="#111"/>
<text x="403.3" y="578.9" font-size="12.6" fill="#111" textLength="42.3" lengthAdjust="spacingAndGlyphs" font-weight="bold">CAMV:</text>
<text x="639.2" y="578.9" font-size="12.6" fill="#111" textLength="64.6" lengthAdjust="spacingAndGlyphs" font-weight="bold">G01331118</text>
<text x="403.3" y="597.9" font-size="12.6" fill="#111" textLength="51.5" lengthAdjust="spacingAndGlyphs" font-weight="bold">MOTOR:</text>
<text x="639.2" y="597.9" font-size="12.6" fill="#111" textLength="108.5" lengthAdjust="spacingAndGlyphs" font-weight="bold">157FMI3B2X22094</text>
<text x="403.3" y="616.5" font-size="12.6" fill="#111" textLength="48.7" lengthAdjust="spacingAndGlyphs" font-weight="bold">CHASIS:</text>
<text x="639.2" y="616.5" font-size="12.6" fill="#111" textLength="124.4" lengthAdjust="spacingAndGlyphs" font-weight="bold">9FSNF41B4DC240896</text>
<text x="403.3" y="636.7" font-size="12.6" fill="#111" textLength="39.5" lengthAdjust="spacingAndGlyphs" font-weight="bold">PLACA</text>
<text x="639.2" y="636.7" font-size="12.6" fill="#111" textLength="45.1" lengthAdjust="spacingAndGlyphs" font-weight="bold">EA300H</text>
<text x="403.3" y="656.2" font-size="12.6" fill="#111" textLength="50.7" lengthAdjust="spacingAndGlyphs" font-weight="bold">MARCA:</text>
<text x="639.2" y="656.2" font-size="12.6" fill="#111" textLength="45.1" lengthAdjust="spacingAndGlyphs" font-weight="bold">SUZUKI</text>
<text x="403.3" y="675.0" font-size="12.6" fill="#111" textLength="58.5" lengthAdjust="spacingAndGlyphs" font-weight="bold">MODELO:</text>
<text x="639.2" y="675.0" font-size="12.6" fill="#111" textLength="40.1" lengthAdjust="spacingAndGlyphs" font-weight="bold">GN125</text>
<text x="403.3" y="694.5" font-size="12.6" fill="#111" textLength="40.4" lengthAdjust="spacingAndGlyphs" font-weight="bold">CLASE:</text>
<text x="639.2" y="694.5" font-size="12.6" fill="#111" textLength="88.2" lengthAdjust="spacingAndGlyphs" font-weight="bold">MOTOCICLETA</text>
<text x="403.3" y="714" font-size="12.6" fill="#111" textLength="61" lengthAdjust="spacingAndGlyphs" font-weight="bold">AÑO CLASE</text>
<text x="639.2" y="714" font-size="12.6" fill="#111" textLength="38" lengthAdjust="spacingAndGlyphs" font-weight="bold">2013X</text>
<rect x="0" y="706" width="1366" height="22" fill="#2b579a"/>
<text x="7.3" y="721.1" font-size="11.2" fill="#ffffff" textLength="351.4" lengthAdjust="spacingAndGlyphs">"ORDEN NUEVA MOTOCICLETA": 68.816 caracteres (valor aproximado).</text>
<g stroke="#fff" stroke-width="1" fill="none"><path d="M1083.5 710.5 H1089.5 V723.5 H1083.5 Z M1089.5 710.5 H1096 V723.5 H1089.5"/><path d="M1085 713h3M1085 715.5h3M1085 718h3M1085 720.5h3M1091 713h3.5M1091 715.5h3.5M1091 718h3.5M1091 720.5h3.5"/></g>
<rect x="1109" y="706" width="38" height="22" fill="#1f4e8f"/>
<g stroke="#fff" stroke-width="1" fill="none"><rect x="1121.5" y="710.5" width="13" height="13"/><path d="M1123.5 713.5h9M1123.5 716h9M1123.5 718.5h9M1123.5 721h9"/></g>
<g stroke="#fff" stroke-width="1" fill="none"><path d="M1159.5 721.5 V710.5 H1170.5 V715"/><path d="M1161.5 713h7M1161.5 715.5h5M1161.5 718h4"/></g><circle cx="1169.5" cy="719.5" r="4.2" fill="#fff"/><path d="M1167 719.5 h5 M1169.5 716 v7" stroke="#2b579a" stroke-width="0.8"/>
<rect x="1190" y="716" width="6.5" height="2" fill="#fff"/>
<rect x="1200" y="716" width="100" height="1" fill="#ffffff"/>
<rect x="1248" y="711" width="4" height="11" fill="#fff"/>
<rect x="1304" y="716" width="8" height="2" fill="#fff"/>
<rect x="1307" y="713" width="2" height="8" fill="#fff"/>
<text x="1327.8" y="721.1" font-size="11.5" fill="#ffffff" textLength="29.2" lengthAdjust="spacingAndGlyphs">100 %</text>
<rect x="0" y="728" width="1366" height="40" fill="#202020"/>
<rect x="316" y="728" width="52" height="40" fill="#333333"/>
<rect x="55" y="766" width="44" height="2" fill="#a8a8a8"/>
<rect x="108" y="766" width="44" height="2" fill="#a8a8a8"/>
<rect x="161" y="766" width="44" height="2" fill="#a8a8a8"/>
<rect x="214" y="766" width="35" height="2" fill="#a8a8a8"/>
<rect x="267" y="766" width="44" height="2" fill="#a8a8a8"/>
<rect x="316" y="766" width="52" height="2" fill="#a8a8a8"/>
<rect x="249.5" y="766" width="8.5" height="2" fill="#6e6e6e"/>
<path d="M14 740.5 L22.5 739.3 V747.5 H14 Z M23.8 739.1 L34 737.6 V747.5 H23.8 Z M14 748.8 H22.5 V757 L14 755.8 Z M23.8 748.8 H34 V758.5 L23.8 757.2 Z" fill="#ffffff"/>
<defs><linearGradient id="ff" x1="0.8" y1="0" x2="0.3" y2="1"><stop offset="0" stop-color="#fff44f"/><stop offset="0.35" stop-color="#ff9a2e"/><stop offset="0.7" stop-color="#ff4f5e"/><stop offset="1" stop-color="#e31587"/></linearGradient><radialGradient id="ffp" cx="0.4" cy="0.3" r="0.8"><stop offset="0" stop-color="#b833e1"/><stop offset="1" stop-color="#5b3fd9"/></radialGradient></defs>
<path d="M79.8 736 Q83 740 86.5 742 Q89 746 88.3 750 A11.2 11.2 0 1 1 67 743.5 L69.5 739.8 L70.5 743 L73 740.5 Q74 742 74 743.5 Q77 740 79.8 736 Z" fill="url(#ff)"/>
<circle cx="77" cy="748" r="5" fill="url(#ffp)"/>
<path d="M69 745 Q72 743 76 744 Q80 743.8 80.5 745.5 Q77 745.5 75.5 747.5 Q72 746 69 747 Z" fill="#ff9a2e"/>
<circle cx="129.8" cy="747.8" r="11.2" fill="#ea4335"/><path d="M129.8 747.8 L139.5 742.2 A11.2 11.2 0 0 1 129.8 759 Z" fill="#fbbc04"/><path d="M129.8 747.8 L129.8 759 A11.2 11.2 0 0 1 120.1 742.2 Z" fill="#34a853"/><circle cx="129.8" cy="747.8" r="5" fill="#fff"/><circle cx="129.8" cy="747.8" r="3.9" fill="#4285f4"/>
<circle cx="136" cy="753.7" r="7.3" fill="#c9c9d2"/><path d="M131 752 Q133 749 134.5 752 M137.5 752 Q139 749 141 752" stroke="#2a2a35" stroke-width="1.2" fill="none"/><ellipse cx="136" cy="756" rx="2.3" ry="2" fill="#55555f"/><path d="M132 749 L134 751 M140 749 L138 751" stroke="#3060a0" stroke-width="0.9"/>
<path d="M172.5 740 H180 L182 742 H194 V757 H172.5 Z" fill="#f8d775"/><rect x="172.5" y="744" width="21.5" height="13" fill="#ffe599"/><path d="M178 757 V750.5 H189 V757 H186 V753.5 H181 V757 Z" fill="#2d9fd8"/>
<rect x="225" y="741" width="22" height="16" fill="#3a9bd9"/><rect x="226.5" y="742.5" width="19" height="13" fill="#5db8ef"/><circle cx="231.5" cy="747.5" r="3.5" fill="#fff"/><path d="M231.5 747.5 V744 A3.5 3.5 0 0 1 235 747.5 Z" fill="#f2a73b"/><path d="M238 745h6M238 747.5h6M238 750h6" stroke="#fff" stroke-width="1"/><rect x="227" y="752.5" width="18" height="1.5" fill="#fff"/>
<rect x="280" y="737" width="17" height="22" rx="1" fill="#9ccbee" stroke="#4a90c8" stroke-width="1"/><rect x="281.8" y="739" width="13.4" height="6" fill="#eaf5fd"/><rect x="281.8" y="739" width="13.4" height="1.2" fill="#f3a640"/><rect x="282.0" y="747.0" width="2.4" height="1.9" fill="#eef7fd"/><rect x="285.3" y="747.0" width="2.4" height="1.9" fill="#eef7fd"/><rect x="288.6" y="747.0" width="2.4" height="1.9" fill="#eef7fd"/><rect x="291.9" y="747.0" width="2.4" height="1.9" fill="#eef7fd"/><rect x="282.0" y="749.9" width="2.4" height="1.9" fill="#eef7fd"/><rect x="285.3" y="749.9" width="2.4" height="1.9" fill="#eef7fd"/><rect x="288.6" y="749.9" width="2.4" height="1.9" fill="#eef7fd"/><rect x="291.9" y="749.9" width="2.4" height="1.9" fill="#eef7fd"/><rect x="282.0" y="752.8" width="2.4" height="1.9" fill="#eef7fd"/><rect x="285.3" y="752.8" width="2.4" height="1.9" fill="#eef7fd"/><rect x="288.6" y="752.8" width="2.4" height="1.9" fill="#eef7fd"/><rect x="291.9" y="752.8" width="2.4" height="1.9" fill="#eef7fd"/><rect x="282.0" y="755.7" width="2.4" height="1.9" fill="#eef7fd"/><rect x="285.3" y="755.7" width="2.4" height="1.9" fill="#eef7fd"/><rect x="288.6" y="755.7" width="2.4" height="1.9" fill="#eef7fd"/><rect x="291.9" y="755.7" width="2.4" height="1.9" fill="#eef7fd"/><rect x="291.9" y="752.8" width="2.4" height="4.8" fill="#f3a640"/>
<rect x="342.9" y="739" width="10.2" height="17.2" fill="#fff"/><path d="M344.5 742h7M344.5 744.5h7M344.5 747h7M344.5 749.5h7M344.5 752h7" stroke="#2b579a" stroke-width="1"/><path d="M330.4 738.5 L344.4 736.4 V759 L330.4 756.9 Z" fill="#2b579a"/>
<text x="332.6" y="752.3" font-size="10.5" fill="#fff" textLength="9.5" lengthAdjust="spacingAndGlyphs" font-weight="bold">W</text>
<path d="M1123.5 751 L1129.3 745 L1135 751" stroke="#fff" stroke-width="1.4" fill="none"/>
<g stroke="#fff" stroke-width="1" fill="none"><rect x="1148.5" y="744.5" width="12.5" height="9"/><path d="M1154.5 753.5 V756 M1150.5 756.5 H1158.5"/><rect x="1144.5" y="741.5" width="4" height="4"/><path d="M1146.5 745.5 V752.5 H1148.5"/></g>
<g stroke="#fff" stroke-width="1.2" fill="none"><path d="M1169 743.5 L1184 741.5 V754 L1169 755.5 Z"/><circle cx="1176" cy="748.5" r="3"/></g><circle cx="1180.5" cy="753" r="4" fill="#e81123"/><rect x="1180" y="750" width="1.2" height="3.5" fill="#fff"/><rect x="1180" y="754.5" width="1.2" height="1.2" fill="#fff"/>
<path d="M1193 745.5 H1196 L1200 742 V755 L1196 751.5 H1193 Z" fill="none" stroke="#fff" stroke-width="1.1"/><path d="M1202.5 745.5 Q1204.5 748.5 1202.5 751.5 M1205 743.5 Q1208 748.5 1205 753.5" stroke="#aaa" stroke-width="1" fill="none"/>
<text x="1221" y="752" font-size="12" fill="#ffffff" textLength="19" lengthAdjust="spacingAndGlyphs">ESP</text>
<text x="1268" y="743.5" font-size="12" fill="#ffffff" textLength="25.8" lengthAdjust="spacingAndGlyphs">11:29</text>
<text x="1258" y="762" font-size="12" fill="#ffffff" textLength="45.5" lengthAdjust="spacingAndGlyphs">7/9/2022</text>
<path d="M1325.5 740.5 H1341.5 V752 H1333 L1330 755 V752 H1325.5 Z" fill="#fff"/><path d="M1328 744h11M1328 746.5h11M1328 749h8" stroke="#202020" stroke-width="1"/>
<circle cx="1339.5" cy="752.3" r="6.3" fill="#202020" stroke="#888" stroke-width="1"/>
<text x="1336.2" y="756.3" font-size="10" fill="#fff" textLength="6.2" lengthAdjust="spacingAndGlyphs">3</text>
<rect x="1361" y="728" width="1" height="40" fill="#5a5a5a"/></svg></body></html>
